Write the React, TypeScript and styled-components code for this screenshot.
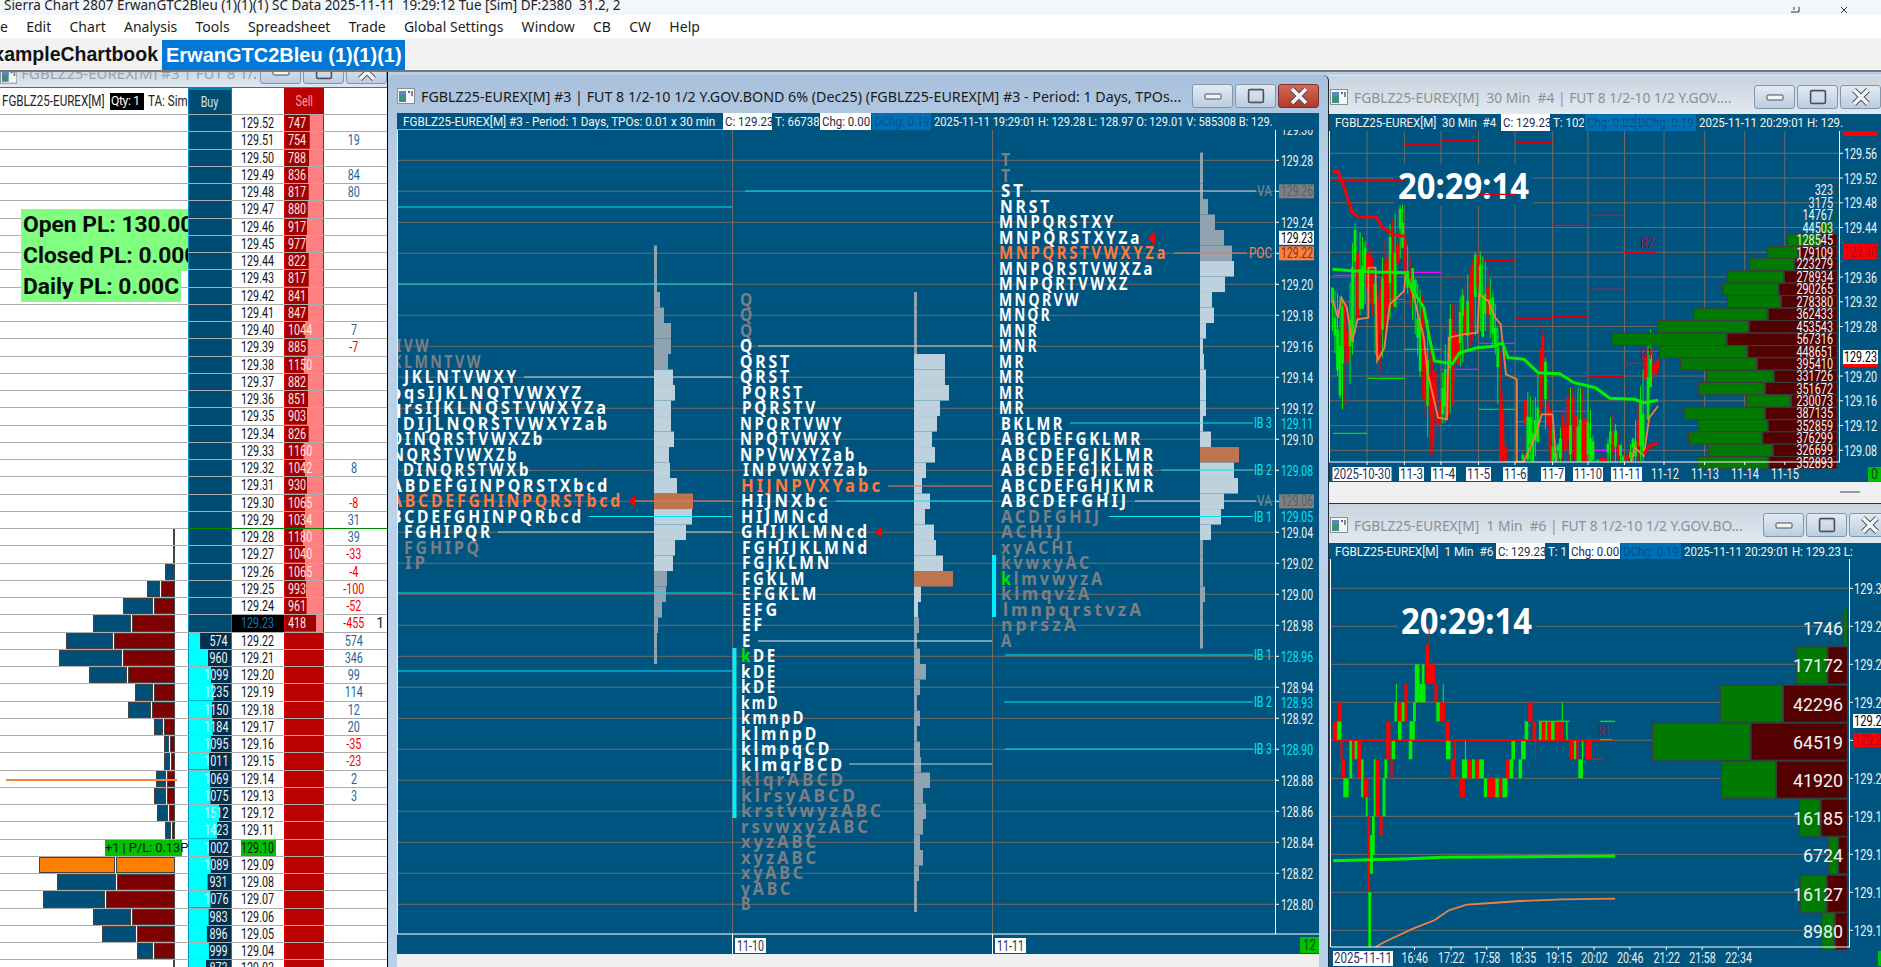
import React from 'react';
import styled, { createGlobalStyle } from 'styled-components';

const CHART = '#005580';
const GRID = '#72695f';
const CYAN = '#00e6f6';
const SOFT = '#c4d0d6';
const ORANGE = '#f2784a';

const GlobalStyle = createGlobalStyle`
	html, body { margin: 0; padding: 0; background: #fff; }
	* { box-sizing: border-box; }
`;

/* ---------- ladder data ---------- */
const sells = [747, 754, 788, 836, 817, 880, 917, 977, 822, 817, 841, 847, 1044, 885, 1150, 882, 851, 903, 826, 1160, 1042, 930, 1065, 1034, 1180, 1040, 1065, 993, 961, 418];
const buys = [574, 960, 1099, 1235, 1150, 1184, 1095, 1011, 1069, 1075, 1512, 1423, 1002, 1089, 931, 1076, 983, 896, 999, 873];
const deltas: Record<string, number> = {
	'129.51': 19, '129.49': 84, '129.48': 80, '129.40': 7, '129.39': -7, '129.32': 8, '129.30': -8, '129.29': 31,
	'129.28': 39, '129.27': -33, '129.26': -4, '129.25': -100, '129.24': -52, '129.23': -455, '129.22': 574,
	'129.21': 346, '129.20': 99, '129.19': 114, '129.18': 12, '129.17': 20, '129.16': -35, '129.15': -23, '129.14': 2, '129.13': 3,
};
// start x of blue part, end x of blue part, from left edge of the window; red runs to x=175
const hist: Record<string, [number, number]> = {
	'129.28': [172, 172], '129.27': [172, 172], '129.26': [164, 174], '129.25': [146, 159], '129.24': [122, 152], '129.23': [92, 130],
	'129.22': [65, 112], '129.21': [58, 121], '129.20': [88, 126], '129.19': [134, 152], '129.18': [127, 150], '129.17': [153, 162],
	'129.16': [163, 168], '129.15': [163, 169], '129.14': [155, 165], '129.13': [153, 165], '129.12': [156, 167], '129.11': [164, 170],
	'129.09': [38, 114], '129.08': [56, 115], '129.07': [42, 104], '129.06': [92, 130], '129.05': [101, 135], '129.04': [136, 152], '129.03': [171, 171],
};
const prices = Array.from({ length: 50 }, (_, i) => (129.52 - i * 0.01).toFixed(2));

/* ---------- TPO data: price, letters, x start, x end, tone ---------- */
type Tpo = [number, string, number, number, string?];
const tpoLeft: Tpo[] = [
	[129.16, 'IVW', 396, 428, 'd'], [129.15, 'KLMNTVW', 392, 480, 'd'], [129.14, 'JKLNTVWXY', 404, 516],
	[129.13, 'pqsIJKLNQTVWXYZ', 391, 581], [129.12, 'qrsIJKLNQSTVWXYZa', 391, 606], [129.11, 'DIJLNQRSTVWXYZab', 403, 607],
	[129.10, 'DINQRSTVWXZb', 391, 542], [129.09, 'NQRSTVWXZb', 392, 516], [129.08, 'DINQRSTWXb', 403, 528],
	[129.07, 'ABDEFGINPQRSTXbcd', 391, 607], [129.06, 'ABCDEFGHINPQRSTbcd', 391, 620, 'o'], [129.05, 'BCDEFGHINPQRbcd', 391, 581],
	[129.04, 'FGHIPQR', 404, 490], [129.03, 'FGHIPQ', 404, 479, 'd'], [129.02, 'IP', 405, 425, 'd'],
];
const tpoMid: Tpo[] = [
	[129.19, 'Q', 740, 752, 'd'], [129.18, 'Q', 740, 752, 'd'], [129.17, 'Q', 740, 752, 'd'], [129.16, 'Q', 740, 752],
	[129.15, 'QRST', 740, 789], [129.14, 'QRST', 740, 789], [129.13, 'PQRST', 742, 802], [129.12, 'PQRSTV', 742, 815],
	[129.11, 'NPQRTVWY', 740, 841], [129.10, 'NPQTVWXY', 740, 841], [129.09, 'NPVWXYZab', 740, 854], [129.08, 'INPVWXYZab', 743, 867],
	[129.07, 'HIJNPVXYabc', 741, 880, 'o'], [129.06, 'HIJNXbc', 741, 827], [129.05, 'HIJMNcd', 741, 828], [129.04, 'GHIJKLMNcd', 741, 867],
	[129.03, 'FGHIJKLMNd', 742, 867], [129.02, 'FGJKLMN', 742, 829], [129.01, 'FGKLM', 742, 804], [129.00, 'EFGKLM', 742, 816],
	[128.99, 'EFG', 742, 777], [128.98, 'EF', 742, 762], [128.97, 'E', 742, 750], [128.96, '!kDE', 741, 775], [128.95, 'kDE', 741, 775],
	[128.94, 'kDE', 741, 775], [128.93, 'kmD', 741, 777], [128.92, 'kmnpD', 741, 803], [128.91, 'klmnpD', 741, 816], [128.90, 'klmpqCD', 741, 829],
	[128.89, 'klmqrBCD', 741, 842], [128.88, 'klqrABCD', 741, 843, 'd'], [128.87, 'klrsyABCD', 741, 855, 'd'], [128.86, 'krstvwyzABC', 741, 881, 'd'],
	[128.85, 'rsvwxyzABC', 741, 868, 'd'], [128.84, 'xyzABC', 741, 816, 'd'], [128.83, 'xyzABC', 741, 816, 'd'], [128.82, 'xyABC', 741, 803, 'd'],
	[128.81, 'yABC', 741, 790, 'd'], [128.80, 'B', 741, 750, 'd'],
];
const tpoRight: Tpo[] = [
	[129.28, 'T', 1001, 1010, 'd'], [129.27, 'T', 1001, 1010, 'd'], [129.26, 'ST', 1001, 1023], [129.25, 'NRST', 1000, 1049],
	[129.24, 'MNPQRSTXY', 999, 1113], [129.23, 'MNPQRSTXYZa', 999, 1139], [129.22, 'MNPQRSTVWXYZa', 999, 1165, 'o'], [129.21, 'MNPQRSTVWXZa', 999, 1152],
	[129.20, 'MNPQRTVWXZ', 999, 1127], [129.19, 'MNQRVW', 999, 1078], [129.18, 'MNQR', 999, 1049], [129.17, 'MNR', 999, 1036], [129.16, 'MNR', 999, 1036],
	[129.15, 'MR', 999, 1023], [129.14, 'MR', 999, 1023], [129.13, 'MR', 999, 1023], [129.12, 'MR', 999, 1023], [129.11, 'BKLMR', 1001, 1062],
	[129.10, 'ABCDEFGKLMR', 1001, 1140], [129.09, 'ABCDEFGJKLMR', 1001, 1153], [129.08, 'ABCDEFGJKLMR', 1001, 1153], [129.07, 'ABCDEFGHJKMR', 1001, 1153],
	[129.06, 'ABCDEFGHIJ', 1001, 1126], [129.05, 'ACDFGHIJ', 1001, 1099, 'd'], [129.04, 'ACHIJ', 1001, 1061, 'd'], [129.03, 'xyACHI', 1001, 1072, 'd'],
	[129.02, 'kvwxyAC', 1001, 1089, 'd'], [129.01, '!klmvwyzA', 1001, 1102, 'd'], [129.00, 'klmqvzA', 1001, 1089, 'd'], [128.99, 'lmnpqrstvzA', 1003, 1141, 'd'],
	[128.98, 'nprszA', 1001, 1076, 'd'], [128.97, 'A', 1001, 1011, 'd'],
];

/* profile bars: top price, widths going down; p marks the POC row, l the light value-area rows */
type Profile = { base: number; top: number; widths: number[]; poc: number; from: number; to: number };
const profiles: Profile[] = [
	{
		base: 654, top: 129.22, poc: 129.06, from: 129.14, to: 129.02,
		widths: [3, 3, 3, 6, 10, 17, 17, 14, 19, 21, 17, 17, 20, 15, 16, 23, 39, 38, 32, 21, 19, 13, 12, 8, 4, 3, 3],
	},
	{
		base: 914, top: 129.19, poc: 129.01, from: 129.15, to: 128.99,
		widths: [3, 3, 3, 3, 31, 31, 35, 26, 23, 18, 21, 12, 8, 16, 11, 20, 22, 29, 39, 7, 4, 5, 3, 6, 12, 6, 3, 6, 3, 6, 7, 16, 9, 12, 9, 6, 9, 5, 3, 3],
	},
	{
		base: 1200, top: 129.28, poc: 129.09, from: 129.21, to: 129.04,
		widths: [3, 3, 3, 8, 15, 24, 32, 34, 25, 12, 14, 6, 3, 4, 6, 6, 6, 3, 11, 39, 34, 38, 24, 21, 11, 3, 3, 3, 5, 3, 3, 3],
	},
];

const yMain = (p: number) => 129.3 + (129.3 - p) * 1550;

type Seg = [number, number, number, string];
const mainLines: Seg[] = [
	[191, 745, 992, CYAN], [207, 398, 732, CYAN], [284, 398, 732, CYAN], [346, 758, 992, SOFT], [377, 524, 732, SOFT],
	[486, 888, 992, ORANGE], [501, 635, 732, ORANGE], [501, 836, 992, CYAN], [516.5, 589, 732, CYAN], [532, 498, 732, SOFT],
	[593, 398, 732, CYAN], [641, 758, 992, '#e8f0f4'], [671, 398, 732, CYAN], [764, 849, 992, SOFT],
	[191, 1031, 1256, SOFT], [253, 1174, 1247, ORANGE], [423, 1070, 1253, CYAN], [470, 1161, 1253, CYAN], [501, 1135, 1256, SOFT],
	[516.5, 1109, 1253, CYAN], [655, 1005, 1253, CYAN], [702, 1004, 1253, CYAN], [749, 1005, 1253, CYAN],
];
const lineTags: [number, string, string][] = [
	[191, 'VA', 'va'], [253, 'POC', 'poc'], [423, 'IB 3', 'ib'], [470, 'IB 2', 'ib'], [501, 'VA', 'va'],
	[516.5, 'IB 1', 'ib'], [655, 'IB 1', 'ib'], [702, 'IB 2', 'ib'], [749, 'IB 3', 'ib'],
];
const axisBoxes: Record<string, [string, string]> = {
	'129.26': ['#7f7f7f', '#54626a'], '129.23': ['#ffffff', '#000000'], '129.22': ['#ff7f3f', '#7a3412'], '129.06': ['#7f7f7f', '#54626a'],
};
const axisCyan = ['129.11', '129.08', '129.05', '128.96', '128.93', '128.90'];

/* ---------- 30 min chart (coords read off the reference, see X9/Y9) ---------- */
const X9 = (x: number) => 1320 + x / 2.795;
const Y9 = (y: number) => 70 + y / 3;
const Y10 = (y: number) => 500 + y / 3;
const poly = (pts: number[][], fy: (n: number) => number) => pts.map(([x, y]) => `${X9(x).toFixed(1)},${fy(y).toFixed(1)}`).join(' ');

const vols30: [string, number, number, number][] = [
	['323', 358, 1442, 1445], ['3175', 395, 0, 0], ['14767', 433, 1436, 1441], ['44503', 470, 1400, 1430], ['128545', 508, 1306, 1400],
	['179109', 545, 1250, 1335], ['223279', 580, 1200, 1325], ['278934', 618, 1138, 1295], ['290265', 655, 1125, 1280], ['278380', 692, 1138, 1287],
	['362433', 730, 1044, 1250], ['453543', 767, 944, 1197], ['567316', 805, 815, 1135], ['448651', 842, 949, 1193], ['395410', 879, 1008, 1220],
	['331726', 916, 1081, 1267], ['351672', 953, 1058, 1242], ['230073', 990, 1192, 1315], ['387135', 1027, 1018, 1242], ['352859', 1064, 1056, 1250],
	['376299', 1101, 1030, 1235], ['326699', 1138, 1086, 1264], ['352893', 1175, 1056, 1252],
];
const levels30: [number, number, number, string][] = [
	[236, 338, 220, '#e00010'], [338, 443, 208, '#e00010'], [546, 650, 214, '#e00010'], [36, 236, 328, '#e00010'], [443, 546, 370, '#e00010'],
	[650, 750, 463, '#ff0000'], [750, 850, 433, '#ff0000'], [850, 940, 544, '#e00010'], [338, 443, 620, '#ff0000'], [443, 546, 568, '#e00010'],
	[750, 850, 655, '#ff0000'], [546, 650, 742, '#e00010'], [650, 750, 736, '#e00010'], [750, 850, 916, '#e00010'], [850, 940, 877, '#ff0000'],
	[36, 132, 613, '#ff00ff'], [132, 236, 685, '#ff00ff'], [238, 338, 604, '#ff00ff'], [338, 443, 895, '#ff00ff'], [443, 546, 817, '#ff00ff'],
	[546, 650, 1052, '#ff00ff'], [650, 750, 1021, '#ff00ff'], [750, 850, 1138, '#ff00ff'],
	[36, 132, 1087, '#00e000'], [132, 236, 922, '#00e000'], [236, 338, 835, '#00e000'], [443, 546, 1015, '#00e000'],
];
const envelope30 = [
	[35, 650, 780], [60, 680, 1020], [80, 700, 990], [95, 450, 800], [120, 500, 700], [145, 540, 700], [160, 680, 950], [185, 480, 800], [205, 440, 700],
	[230, 390, 520], [240, 500, 640], [265, 620, 780], [290, 680, 1010], [310, 800, 1170], [335, 1000, 1060], [360, 700, 1050], [385, 700, 900], [410, 620, 850],
	[440, 525, 780], [470, 590, 780], [490, 700, 850], [505, 850, 1170], [522, 1170, 1172], [566, 1170, 1172], [575, 950, 1170], [600, 1000, 1170], [622, 765, 1000],
	[640, 980, 1170], [660, 1150, 1172], [690, 950, 1170], [750, 950, 1170], [770, 1170, 1172], [800, 1150, 1172], [815, 1010, 1170], [850, 1165, 1172], [875, 1100, 1170],
	[905, 880, 1170], [925, 770, 930], [935, 870, 930], [945, 860, 900],
];
const candles30 = (() => {
	let seed = 17;
	const rnd = () => {
		seed = (seed * 16807) % 2147483647;
		return seed / 2147483647;
	};
	const out: { x: number; a: number; b: number; ha: number; hb: number; up: boolean }[] = [];
	for (let x = 35; x <= 945; x += 7) {
		const i = envelope30.findIndex((e) => e[0] >= x);
		const hi = envelope30[Math.max(i, 1)];
		const lo = envelope30[Math.max(i, 1) - 1];
		const t = (x - lo[0]) / (hi[0] - lo[0]);
		const top = lo[1] + (hi[1] - lo[1]) * t;
		const bot = lo[2] + (hi[2] - lo[2]) * t;
		const a = top + rnd() * (bot - top) * 0.55;
		const b = Math.min(a + (0.25 + rnd() * 0.45) * (bot - top), 1172);
		out.push({ x, a, b, ha: top, hb: Math.min(bot, 1172), up: rnd() > 0.48 });
	}
	return out;
})();
const redLine30 = [[35, 300], [50, 302], [65, 340], [90, 425], [105, 437], [158, 438], [175, 470], [205, 490], [240, 497]];
const redLine30b = [[905, 1150], [920, 1125], [945, 1115]];
const greenLine30 = [[35, 595], [100, 600], [160, 603], [240, 605], [255, 650], [290, 710], [305, 795], [320, 870], [370, 878], [390, 845], [440, 830], [490, 825], [510, 815], [525, 860], [570, 865], [610, 905], [670, 908], [710, 935], [770, 950], [810, 982], [880, 985], [905, 995], [945, 988]];
const orangeLine30 = [[35, 685], [50, 740], [60, 680], [75, 710], [90, 810], [105, 745], [135, 740], [135, 590], [155, 590], [160, 870], [180, 830], [195, 700], [235, 660], [240, 600], [265, 690], [290, 800], [300, 900], [330, 1040], [355, 1045], [360, 800], [400, 790], [440, 785], [445, 670], [470, 690], [490, 740], [505, 760], [520, 910], [550, 925], [550, 1172], [570, 1172], [600, 1100], [620, 1030], [650, 1030], [660, 1172]];
const orangeLine30b = [[870, 1172], [880, 1130], [905, 1155], [920, 1040], [945, 1005]];
const axis30 = ['129.56', '129.52', '129.48', '129.44', '129.36', '129.32', '129.28', '129.20', '129.16', '129.12', '129.08'];
const grid30 = [1367, 1404.4, 1441, 1478.5, 1515, 1552.6, 1588, 1624.5, 1664, 1704.6, 1744.7, 1784.8];
const dates30: [string, number, number, boolean][] = [
	['2025-10-30', 1332.5, 1391.5, true], ['11-3', 1399, 1424, true], ['11-4', 1431, 1456, true], ['11-5', 1466, 1491, true], ['11-6', 1503, 1527.5, true],
	['11-7', 1541, 1565, true], ['11-10', 1573, 1603, true], ['11-11', 1611, 1642, true], ['11-12', 1650, 1680, false], ['11-13', 1690, 1720, false],
	['11-14', 1730, 1760, false], ['11-15', 1770, 1800, false],
];

/* ---------- 1 min chart ---------- */
const vols1: [string, number, number, number][] = [
	['1746', 378, 1463, 1473], ['17172', 490, 1331, 1417], ['42296', 605, 1119, 1293], ['64519', 719, 929, 1202], ['41920', 833, 1122, 1273],
	['16185', 947, 1340, 1398], ['6724', 1060, 1422, 1447], ['16127', 1175, 1342, 1415], ['8980', 1288, 1402, 1438],
];
type Bar = [number, number, number, number, 'r' | 'g'];
const bars1: Bar[] = [
	[36, 48, 658, 715, 'r'], [48, 60, 658, 715, 'g'], [50, 60, 601, 658, 'r'], [57, 63, 715, 772, 'r'], [60, 70, 772, 829, 'r'], [65, 80, 829, 886, 'g'],
	[82, 90, 715, 829, 'g'], [90, 97, 715, 772, 'r'], [97, 105, 715, 772, 'g'], [105, 115, 715, 829, 'r'], [115, 122, 772, 886, 'g'], [122, 135, 829, 886, 'r'],
	[128, 133, 886, 943, 'g'], [133, 140, 943, 1170, 'r'], [135, 143, 1170, 1335, 'g'], [140, 148, 1000, 1115, 'g'], [145, 153, 943, 1060, 'g'], [150, 158, 772, 943, 'g'],
	[155, 165, 772, 943, 'r'], [167, 175, 943, 1000, 'r'], [175, 183, 829, 943, 'g'], [180, 188, 772, 829, 'g'], [185, 197, 658, 772, 'r'], [197, 203, 772, 829, 'r'],
	[200, 210, 715, 772, 'g'], [208, 218, 601, 658, 'g'], [212, 215, 545, 601, 'g'], [218, 228, 658, 715, 'g'], [215, 228, 601, 658, 'r'], [228, 238, 601, 658, 'g'],
	[236, 244, 545, 658, 'r'], [248, 258, 715, 772, 'g'], [250, 265, 658, 715, 'g'], [260, 268, 601, 658, 'g'], [265, 278, 487, 601, 'g'], [278, 295, 545, 601, 'g'],
	[285, 292, 487, 545, 'g'], [295, 305, 430, 545, 'r'], [305, 322, 487, 545, 'r'], [320, 330, 545, 601, 'r'], [325, 335, 601, 658, 'g'], [335, 350, 601, 658, 'r'],
	[343, 346, 545, 601, 'g'], [350, 362, 658, 715, 'r'], [352, 365, 715, 772, 'g'], [365, 378, 772, 829, 'r'], [375, 380, 715, 772, 'r'], [390, 405, 829, 886, 'r'],
	[397, 412, 772, 829, 'g'], [405, 408, 715, 772, 'g'], [412, 425, 772, 829, 'r'], [425, 433, 772, 829, 'g'], [433, 445, 772, 829, 'r'], [445, 458, 772, 829, 'g'],
	[458, 468, 829, 886, 'g'], [468, 490, 829, 886, 'r'], [490, 500, 829, 886, 'g'], [500, 510, 829, 886, 'r'], [510, 524, 829, 886, 'g'], [520, 530, 772, 829, 'r'],
	[530, 540, 772, 829, 'g'], [535, 545, 715, 772, 'g'], [545, 555, 772, 772, 'r'], [555, 565, 772, 829, 'g'], [562, 575, 715, 772, 'g'], [572, 582, 658, 715, 'g'],
	[582, 594, 601, 658, 'r'], [594, 604, 658, 715, 'r'], [601, 604, 715, 772, 'r'], [612, 620, 658, 715, 'g'], [620, 630, 658, 715, 'r'], [630, 636, 658, 715, 'g'],
	[636, 646, 658, 715, 'r'], [646, 656, 658, 715, 'g'], [656, 670, 658, 715, 'r'], [676, 679, 601, 715, 'g'], [672, 680, 658, 715, 'r'], [688, 692, 658, 715, 'g'],
	[698, 710, 715, 772, 'r'], [710, 716, 715, 772, 'g'], [716, 722, 715, 772, 'r'], [722, 735, 772, 829, 'g'], [732, 736, 715, 772, 'g'], [742, 760, 715, 772, 'r'],
];
const ticks1: [number, number, number, string][] = [
	[36, 820, 715, '#ff0000'], [612, 698, 658, '#00e000'], [783, 825, 658, '#00e000'], [783, 817, 713, '#00e000'], [760, 790, 772, '#ff0000'],
];
const orangeLine1 = [[155, 1335], [180, 1320], [210, 1305], [260, 1280], [320, 1255], [360, 1225], [410, 1208], [480, 1203], [560, 1197], [680, 1192], [825, 1190]];
const greenLine1 = [[36, 1076], [140, 1073], [250, 1070], [345, 1066], [575, 1064], [825, 1062]];
const gridY1 = [586.3, 624.3, 662.3, 700.3, 738.3, 776.3, 814.3, 852.3, 890.3, 928.3];
const axis1 = ['129.30', '129.28', '129.26', '129.24', '', '129.20', '129.18', '129.16', '129.14', '129.12'];
const dates1: [string, number][] = [['16:46', 228], ['17:22', 330], ['17:58', 430], ['18:35', 530], ['19:15', 630], ['20:02', 730], ['20:46', 830], ['21:22', 932], ['21:58', 1032], ['22:34', 1133]];

/* ---------- parts ---------- */
function WinIcon() {
	return (
		<svg width="18" height="16" viewBox="0 0 18 16">
			<rect x="0.5" y="0.5" width="17" height="15" fill="#f4f6f8" stroke="#8a8f95" />
			<rect x="2" y="3" width="7" height="11" fill="#3f8f7c" />
			<rect x="2" y="3" width="7" height="4" fill="#5f86b8" />
			<rect x="11" y="3" width="2" height="2" fill="#666" />
			<rect x="14" y="3" width="2" height="5" fill="#888" />
		</svg>
	);
}

function Controls({ active, overhang }: { active?: boolean; overhang?: boolean }) {
	return (
		<WinButtons $overhang={overhang}>
			<WinButton>
				<svg width="18" height="10" viewBox="0 0 18 10"><rect x="1" y="3" width="16" height="5" rx="1" fill="#f4f4f4" stroke="#44505e" /></svg>
			</WinButton>
			<WinButton>
				<svg width="18" height="16" viewBox="0 0 18 16"><rect x="2" y="2" width="14" height="12" rx="1" fill="none" stroke="#44505e" strokeWidth="2.4" /><rect x="3" y="3" width="12" height="10" fill="none" stroke="#f4f4f4" /></svg>
			</WinButton>
			<WinButton $close={active}>
				<svg width="22" height="18" viewBox="0 0 22 18">
					<path d="M4 2 L18 16 M18 2 L4 16" stroke="#44505e" strokeWidth="5.4" />
					<path d="M4 2 L18 16 M18 2 L4 16" stroke="#f6f6f6" strokeWidth="3.6" />
				</svg>
			</WinButton>
		</WinButtons>
	);
}

function TpoRow({ row, cy }: { row: Tpo; cy: number }) {
	const [, raw, x0, x1, tone] = row;
	const green = raw.startsWith('!');
	const letters = green ? raw.slice(1) : raw;
	return (
		<TpoText x={x0} y={cy + 5.8} $tone={tone || 'w'} textLength={x1 - x0 + 3} lengthAdjust="spacingAndGlyphs">
			{green ? <tspan fill="#00e000">{letters[0]}</tspan> : null}
			{green ? letters.slice(1) : letters}
		</TpoText>
	);
}

function LadderRows() {
	return (
		<>
			{prices.map((p, i) => {
				const sell = sells[i];
				const buy = i >= 30 ? buys[i - 30] : undefined;
				const d = deltas[p];
				const h = hist[p];
				return (
					<LadderRow key={p}>
						<HistCell>
							{h ? (
								<>
									{h[1] > h[0] ? <HistBar $kind={p === '129.09' ? 'orange' : 'blue'} style={{ width: h[1] - h[0] }} /> : null}
									{p !== '129.26' ? <HistBar $kind={p === '129.09' ? 'orange' : 'red'} style={{ width: 174 - h[1] - 1 }} /> : null}
								</>
							) : null}
							{p === '129.10' ? <PnlTag>+1 | P/L: 0.13P</PnlTag> : null}
							{p === '129.14' ? <EntryLine /> : null}
						</HistCell>
						<BuyCell $filled={buy !== undefined} style={buy !== undefined ? ({ '--fill': `${buy / 50}px` } as React.CSSProperties) : undefined}>
							{buy !== undefined ? <Num $origin="right">{buy}</Num> : null}
						</BuyCell>
						<PriceCell $last={p === '129.23'}>
							{p === '129.10' ? <FillTag><Num>{p}</Num></FillTag> : <Num>{p}</Num>}
						</PriceCell>
						<SellCell $filled={sell !== undefined} style={sell !== undefined ? ({ '--fill': `${sell === 418 ? 31 : 36 - sell * 0.015}px` } as React.CSSProperties) : undefined}>
							{sell !== undefined ? <Num $origin="left">{sell}</Num> : null}
						</SellCell>
						<DeltaCell $neg={d < 0}>
							{d !== undefined ? <Num>{d}</Num> : null}
							{p === '129.23' ? <PosMark>1</PosMark> : null}
						</DeltaCell>
						{p === '129.29' ? <HighLine /> : null}
					</LadderRow>
				);
			})}
		</>
	);
}

function MainChart() {
	const gridPrices = Array.from({ length: 26 }, (_, i) => 129.3 - i * 0.02);
	return (
		<ChartSvg width="922" height="824" viewBox="397 130 922 824">
			<rect x="397" y="130" width="922" height="824" fill={CHART} />
			{gridPrices.slice(1).map((p) => (
				<line key={p} x1="398" x2="1275" y1={yMain(p)} y2={yMain(p)} stroke={GRID} />
			))}
			<line x1="732.5" x2="732.5" y1="130" y2="934" stroke={GRID} />
			<line x1="992.5" x2="992.5" y1="130" y2="934" stroke={GRID} />
			{profiles.map((pf) =>
				pf.widths.map((w, i) => {
					const p = +(pf.top - i * 0.01).toFixed(2);
					const fill = p === pf.poc ? '#bd7550' : p <= pf.from && p >= pf.to ? '#bdd2dd' : '#8fa3b0';
					return <rect key={`${pf.base}-${i}`} x={pf.base} y={yMain(p) - 7.75} width={w} height={15.5} fill={fill} />;
				}),
			)}
			{mainLines.map(([y, a, b, c], i) => (
				<line key={i} x1={a} x2={b} y1={y} y2={y} stroke={c} strokeWidth="1.2" />
			))}
			<rect x="732.5" y="648" width="4" height="170" fill="#00f0ff" />
			<rect x="992" y="555" width="4" height="62" fill="#00f0ff" />
			<polygon points="629,501 635,495 635,507" fill="#ff0000" />
			<polygon points="875,532 882,526 882,538" fill="#ff0000" />
			<polygon points="1148,238 1155,232 1155,245" fill="#ff0000" />
			{[tpoLeft, tpoMid, tpoRight].map((set) => set.map((r) => <TpoRow key={`${r[2]}-${r[0]}`} row={r} cy={yMain(r[0])} />))}
			{lineTags.map(([y, t, k], i) => (
				<TagText key={i} x={k === 'poc' ? 1249 : k === 'va' ? 1257 : 1254} y={y + 5} $kind={k} textLength={k === 'poc' ? 23 : k === 'va' ? 15 : 18} lengthAdjust="spacingAndGlyphs">{t}</TagText>
			))}
			<line x1="1275.5" x2="1275.5" y1="130" y2="934" stroke="#fff" />
			<line x1="397" x2="1319" y1="934" y2="934" stroke="#fff" />
			<line x1="397.5" x2="397.5" y1="130" y2="934" stroke="#e8f0f4" />
			{gridPrices.map((p) => {
				const s = p.toFixed(2);
				return <line key={s} x1="1276" x2="1279" y1={yMain(p)} y2={yMain(p)} stroke="#fff" />;
			})}
			{gridPrices.filter((p) => !axisBoxes[p.toFixed(2)]).map((p) => {
				const s = p.toFixed(2);
				return (
					<AxisText key={s} x="1281" y={yMain(p) + 5.5} $tone={axisCyan.includes(s) ? 'cyan' : 'white'} textLength="32" lengthAdjust="spacingAndGlyphs">{s}</AxisText>
				);
			})}
			{['129.11', '129.05', '128.93'].map((s) => (
				<AxisText key={s} x="1281" y={yMain(+s) + 5.5} $tone="cyan" textLength="32" lengthAdjust="spacingAndGlyphs">{s}</AxisText>
			))}
			{Object.entries(axisBoxes).map(([s, [bg, fg]]) => (
				<g key={s}>
					<rect x="1279" y={yMain(+s) - 7} width="35" height="14" fill={bg} />
					<AxisText x="1281" y={yMain(+s) + 5} fill={fg} textLength="32" lengthAdjust="spacingAndGlyphs">{s}</AxisText>
				</g>
			))}
			<line x1="732.5" x2="732.5" y1="934" y2="954" stroke="#fff" />
			<line x1="992.5" x2="992.5" y1="934" y2="954" stroke="#fff" />
			<rect x="735" y="938" width="31" height="15" fill="#fff" />
			<DateText x="737" y="950.5" $tone="dark" textLength="27" lengthAdjust="spacingAndGlyphs">11-10</DateText>
			<rect x="995" y="938" width="31" height="15" fill="#fff" />
			<DateText x="997" y="950.5" $tone="dark" textLength="27" lengthAdjust="spacingAndGlyphs">11-11</DateText>
			<rect x="1300" y="937" width="19" height="16" fill="#00c000" />
			<DateText x="1303" y="950" $tone="green" textLength="13" lengthAdjust="spacingAndGlyphs">12</DateText>
		</ChartSvg>
	);
}

function Chart30() {
	const y30 = (p: number) => 152.3 + (129.56 - p) * 618.75;
	return (
		<ChartSvg width="552" height="351" viewBox="1329 130 552 351">
			<rect x="1329" y="130" width="552" height="351" fill={CHART} />
			{Array.from({ length: 14 }, (_, i) => 129.6 - i * 0.04).map((p) => (
				<line key={p} x1="1330" x2="1839" y1={y30(p)} y2={y30(p)} stroke={GRID} />
			))}
			{grid30.map((x) => (
				<line key={x} x1={x} x2={x} y1="130" y2="461" stroke={GRID} />
			))}
			<rect x="1394" y="163" width="139" height="42" fill={CHART} />
			<ClockText x="1398" y="198" textLength="131" lengthAdjust="spacingAndGlyphs">20:29:14</ClockText>
			{levels30.map(([a, b, y, c], i) => (
				<line key={i} x1={X9(a)} x2={X9(b)} y1={Y9(y)} y2={Y9(y)} stroke={c} strokeWidth="1.2" />
			))}
			{candles30.map((c, i) => {
				const col = c.up ? '#00ee00' : '#ff0000';
				return (
					<g key={i}>
						<line x1={X9(c.x)} x2={X9(c.x)} y1={Y9(c.ha)} y2={Y9(c.hb)} stroke={col} />
						<rect x={X9(c.x) - 1.4} y={Y9(c.a)} width="2.8" height={Y9(c.b) - Y9(c.a)} fill={col} />
					</g>
				);
			})}
			<polyline points={poly(orangeLine30, Y9)} fill="none" stroke="#f08040" strokeWidth="1.8" />
			<polyline points={poly(orangeLine30b, Y9)} fill="none" stroke="#f08040" strokeWidth="1.8" />
			<polyline points={poly(redLine30, Y9)} fill="none" stroke="#ff0000" strokeWidth="3" />
			<polyline points={poly(redLine30b, Y9)} fill="none" stroke="#ff0000" strokeWidth="3" />
			<polyline points={poly(greenLine30, Y9)} fill="none" stroke="#00f000" strokeWidth="3" />
			<RLevelText x={X9(895)} y={Y9(530)} textLength="14" lengthAdjust="spacingAndGlyphs">R2</RLevelText>
			<RLevelText x={X9(895)} y={Y9(863)} textLength="13" lengthAdjust="spacingAndGlyphs">R1</RLevelText>
			{vols30.map(([t, cy, g0, g1]) => {
				const top = Y9(cy) - 6.1;
				const right = X9(1445);
				return (
					<g key={t}>
						{g1 > g0 ? <rect x={X9(g0)} y={top} width={X9(g1) - X9(g0)} height="12.2" fill="#007a00" stroke="#3c3c3c" /> : null}
						{g1 > g0 && g1 < 1430 ? <rect x={X9(g1) + 1} y={top} width={right - X9(g1) - 1} height="12.2" fill="#520000" stroke="#3c3c3c" /> : null}
						<VolText x={1833 - t.length * 6.1} y={Y9(cy) + 5} textLength={t.length * 6.1} lengthAdjust="spacingAndGlyphs">{t}</VolText>
					</g>
				);
			})}
			<line x1="1839.5" x2="1839.5" y1="130" y2="461" stroke="#fff" />
			<line x1="1329" x2="1840" y1="461" y2="461" stroke="#fff" />
			<line x1="1329.5" x2="1329.5" y1="130" y2="461" stroke="#fff" />
			<rect x="1843" y="130" width="35" height="5" fill="#ff0000" />
			{axis30.map((s) => (
				<g key={s}>
					<line x1="1840" x2="1843" y1={y30(+s)} y2={y30(+s)} stroke="#fff" />
					<AxisText x="1844" y={y30(+s) + 5.5} $tone="white" textLength="33" lengthAdjust="spacingAndGlyphs">{s}</AxisText>
				</g>
			))}
			<rect x="1843" y="243" width="35" height="15" fill="#ff0000" />
			<AxisText x="1844" y="256" fill="#a01020" textLength="33" lengthAdjust="spacingAndGlyphs">129.40</AxisText>
			<rect x="1843" y="362" width="35" height="4" fill="#ff0000" />
			<rect x="1843" y="349" width="35" height="14" fill="#fff" />
			<AxisText x="1844" y="361" fill="#000" textLength="33" lengthAdjust="spacingAndGlyphs">129.23</AxisText>
			{grid30.map((x) => (
				<line key={x} x1={x} x2={x} y1="461" y2="464" stroke="#fff" />
			))}
			{dates30.map(([t, a, b, box]) => (
				<g key={t}>
					{box ? <rect x={a} y="466" width={b - a} height="14" fill="#fff" /> : null}
					<DateText x={a + 1} y="478" $tone={box ? 'dark' : 'light'} textLength={b - a - 2} lengthAdjust="spacingAndGlyphs">{t}</DateText>
				</g>
			))}
			<rect x="1868" y="466" width="13" height="15" fill="#00c000" />
			<DateText x="1871" y="478" $tone="green" textLength="7" lengthAdjust="spacingAndGlyphs">0</DateText>
		</ChartSvg>
	);
}

function Chart1() {
	return (
		<ChartSvg width="552" height="410" viewBox="1329 557 552 410">
			<rect x="1329" y="557" width="552" height="410" fill={CHART} />
			{gridY1.map((y) => (
				<line key={y} x1="1331" x2="1849" y1={y} y2={y} stroke={GRID} />
			))}
			<rect x="1398" y="606" width="138" height="32" fill={CHART} />
			<ClockText x="1401" y="632" textLength="131" lengthAdjust="spacingAndGlyphs">20:29:14</ClockText>
			<line x1={X9(305)} x2={X9(305)} y1={Y10(370)} y2={Y10(430)} stroke="#ff0000" />
			{bars1.map(([a, b, t, bt, c], i) => (
				<rect key={i} x={X9(a)} y={Y10(t)} width={X9(b) - X9(a)} height={Y10(bt) - Y10(t)} fill={c === 'r' ? '#ff0000' : '#00ee00'} />
			))}
			{ticks1.map(([a, b, y, c], i) => (
				<line key={i} x1={X9(a)} x2={X9(b)} y1={Y10(y)} y2={Y10(y)} stroke={c} strokeWidth="1.4" />
			))}
			<polyline points={poly(orangeLine1, Y10)} fill="none" stroke="#f08040" strokeWidth="1.8" />
			<polyline points={poly(greenLine1, Y10)} fill="none" stroke="#00f000" strokeWidth="3" />
			<RLevelText x={X9(777)} y={Y10(702)} textLength="12" lengthAdjust="spacingAndGlyphs">R1</RLevelText>
			{vols1.map(([t, cy, g0, g1]) => {
				const top = Y10(cy) - 18.5;
				const right = X9(1474);
				return (
					<g key={t}>
						<rect x={X9(g0)} y={top} width={X9(g1) - X9(g0)} height="37" fill="#007a00" stroke="#3c3c3c" />
						<rect x={X9(g1) + 1} y={top} width={right - X9(g1) - 1} height="37" fill="#520000" stroke="#3c3c3c" />
						<VolText x={1843 - t.length * 10} y={Y10(cy) + 7} $big textLength={t.length * 10} lengthAdjust="spacingAndGlyphs">{t}</VolText>
					</g>
				);
			})}
			<line x1="1849.5" x2="1849.5" y1="557" y2="945" stroke="#fff" />
			<line x1="1331" x2="1850" y1="945" y2="945" stroke="#fff" />
			<line x1="1330.5" x2="1330.5" y1="557" y2="945" stroke="#fff" />
			{gridY1.map((y, i) => (
				<g key={y}>
					<line x1="1850" x2="1853" y1={y} y2={y} stroke="#fff" />
					{axis1[i] ? <AxisText x="1854" y={y + 5.5} $tone="white" textLength="34" lengthAdjust="spacingAndGlyphs">{axis1[i]}</AxisText> : null}
				</g>
			))}
			<rect x="1853" y="712" width="28" height="14" fill="#fff" />
			<AxisText x="1854" y="724" fill="#000" textLength="34" lengthAdjust="spacingAndGlyphs">129.23</AxisText>
			<rect x="1853" y="731" width="28" height="14" fill="#ff0000" />
			<AxisText x="1854" y="743" fill="#a01020" textLength="34" lengthAdjust="spacingAndGlyphs">129.22</AxisText>
			<rect x="1333" y="949" width="60" height="15" fill="#fff" />
			<DateText x="1334" y="961" $tone="dark" textLength="58" lengthAdjust="spacingAndGlyphs">2025-11-11</DateText>
			{dates1.map(([t, x]) => (
				<g key={t}>
					<line x1={X9(x + 36)} x2={X9(x + 36)} y1="945" y2="948" stroke="#fff" />
					<DateText x={X9(x)} y="961" $tone="light" textLength="26.5" lengthAdjust="spacingAndGlyphs">{t}</DateText>
				</g>
			))}
			<rect x="1878" y="949" width="3" height="15" fill="#00c000" />
		</ChartSvg>
	);
}

export default function App() {
	return (
		<Page>
			<GlobalStyle />
			<TitleBar>
				<TitleLine>Sierra Chart 2807 ErwanGTC2Bleu (1)(1)(1) SC Data 2025-11-11&nbsp; 19:29:12 Tue [Sim] DF:2380&nbsp; 31.2, 2</TitleLine>
				<AppControls>
					<svg width="70" height="10" viewBox="0 0 70 10">
						<path d="M0 5 H8 V0 M3 0 V3" fill="none" stroke="#333" />
						<path d="M50 0 L56 6 M56 0 L50 6" fill="none" stroke="#333" />
					</svg>
				</AppControls>
			</TitleBar>
			<MenuBar>
				<MenuRow>
					{['e', 'Edit', 'Chart', 'Analysis', 'Tools', 'Spreadsheet', 'Trade', 'Global Settings', 'Window', 'CB', 'CW', 'Help'].map((m) => (
						<MenuItem key={m}>{m}</MenuItem>
					))}
				</MenuRow>
			</MenuBar>
			<TabBar>
				<BookName>ExampleChartbook</BookName>
				<ActiveBook>ErwanGTC2Bleu (1)(1)(1)</ActiveBook>
			</TabBar>
			<Desktop>
				<LadderWindow>
					<LadderTitle>
						<WinIcon />
						<LadderTitleText>FGBLZ25-EUREX[M] #3 | FUT 8 1/2-...</LadderTitleText>
						<Controls />
					</LadderTitle>
					<LadderHead>
						<HeadInfo>
							<HeadLabel $width={108}>FGBLZ25-EUREX[M]</HeadLabel>
							<QtyTag>Qty: 1</QtyTag>
							<HeadLabel $width={40}>TA: Sim</HeadLabel>
						</HeadInfo>
						<BuyHead><Num>Buy</Num></BuyHead>
						<div />
						<SellHead><Num>Sell</Num></SellHead>
						<div />
					</LadderHead>
					<LadderBody>
						<LadderRows />
						<PlBox>
							<PlLine $wide>Open PL: 130.00</PlLine>
							<PlLine $wide>Closed PL: 0.000</PlLine>
							<PlLine>Daily PL: 0.00C</PlLine>
						</PlBox>
					</LadderBody>
				</LadderWindow>
				<MainWindow>
					<WindowTitle $active>
						<WinIcon />
						<WindowName $active $scale={0.95}>FGBLZ25-EUREX[M] #3 | FUT 8 1/2-10 1/2 Y.GOV.BOND 6% (Dec25) (FGBLZ25-EUREX[M] #3 - Period: 1 Days, TPOs...</WindowName>
						<Controls active />
					</WindowTitle>
					<ChartHeader>
						<HeaderName $width={326} $rule><HeadText $scale={0.866}>FGBLZ25-EUREX[M] #3 - Period: 1 Days, TPOs: 0.01 x 30 min</HeadText></HeaderName>
						<HeaderCell $width={49} $tone="light"><HeadText>C: 129.23</HeadText></HeaderCell>
						<HeaderCell $width={46}><HeadText>T: 66738</HeadText></HeaderCell>
						<HeaderCell $width={51} $tone="light"><HeadText>Chg: 0.00</HeadText></HeaderCell>
						<HeaderCell $width={59} $tone="muted"><HeadText>DChg: 0.19</HeadText></HeaderCell>
						<HeaderCell $width={345}><HeadText $scale={0.82}>2025-11-11 19:29:01 H: 129.28 L: 128.97 O: 129.01 V: 585308 B: 129.</HeadText></HeaderCell>
					</ChartHeader>
					<MainChart />
					<BottomStrip $height={13} />
				</MainWindow>
				<SideColumn>
					<SideWindow>
						<WindowTitle>
							<WinIcon />
							<WindowName $scale={0.92}>FGBLZ25-EUREX[M]&nbsp; 30 Min&nbsp; #4 | FUT 8 1/2-10 1/2 Y.GOV....</WindowName>
							<Controls />
						</WindowTitle>
						<ChartHeader>
							<HeaderName $width={172}><HeadText>FGBLZ25-EUREX[M]&nbsp; 30 Min&nbsp; #4</HeadText></HeaderName>
							<HeaderCell $width={49} $tone="light"><HeadText>C: 129.23</HeadText></HeaderCell>
							<HeaderCell $width={33}><HeadText>T: 102</HeadText></HeaderCell>
							<HeaderCell $width={50} $tone="muted"><HeadText>Chg: 0.02</HeadText></HeaderCell>
							<HeaderCell $width={60} $tone="muted"><HeadText>DChg: 0.19</HeadText></HeaderCell>
							<HeaderCell $width={180}><HeadText>2025-11-11 20:29:01 H: 129.</HeadText></HeaderCell>
						</ChartHeader>
						<Chart30 />
						<BottomStrip $height={21}><ScrollDash /></BottomStrip>
					</SideWindow>
					<SideWindow $second>
						<WindowTitle $second>
							<WinIcon />
							<WindowName $scale={0.92}>FGBLZ25-EUREX[M]&nbsp; 1 Min&nbsp; #6 | FUT 8 1/2-10 1/2 Y.GOV.BO...</WindowName>
							<Controls overhang />
						</WindowTitle>
						<ChartHeader $short>
							<HeaderName $width={167}><HeadText $scale={0.87}>FGBLZ25-EUREX[M]&nbsp; 1 Min&nbsp; #6</HeadText></HeaderName>
							<HeaderCell $width={49} $tone="light"><HeadText>C: 129.23</HeadText></HeaderCell>
							<HeaderCell $width={22}><HeadText>T: 1</HeadText></HeaderCell>
							<HeaderCell $width={51} $tone="light"><HeadText>Chg: 0.00</HeadText></HeaderCell>
							<HeaderCell $width={60} $tone="muted"><HeadText>DChg: 0.19</HeadText></HeaderCell>
							<HeaderCell $width={200}><HeadText>2025-11-11 20:29:01 H: 129.23 L:</HeadText></HeaderCell>
						</ChartHeader>
						<Chart1 />
					</SideWindow>
				</SideColumn>
			</Desktop>
		</Page>
	);
}

/* ---------- styles ---------- */
const Page = styled.div`
	display: flex;
	flex-direction: column;
	width: 1881px;
	height: 967px;
	overflow: hidden;
	font-family: 'Noto Sans', sans-serif;
	background: #f0f0f0;
`;
const TitleBar = styled.div`
	display: flex;
	justify-content: space-between;
	flex: none;
	height: 15px;
	padding-left: 4px;
	overflow: hidden;
	background: #f3f6fa;
`;
const TitleLine = styled.div`
	margin-top: -6px;
	font-size: 15px;
	line-height: 20px;
	color: #222;
	white-space: nowrap;
	transform: scaleX(0.897);
	transform-origin: left;
`;
const AppControls = styled.div`
	flex: none;
	padding-right: 20px;
`;
const MenuBar = styled.div`
	flex: none;
	height: 23px;
	overflow: hidden;
	background: #ffffff;
`;
const MenuRow = styled.div`
	display: flex;
	gap: 19.5px;
	width: 800px;
	transform: scaleX(0.935);
	transform-origin: left;
`;
const MenuItem = styled.span`
	font-size: 15px;
	line-height: 23px;
	color: #1c1c1c;
	white-space: nowrap;
`;
const TabBar = styled.div`
	display: flex;
	flex: none;
	align-items: flex-end;
	height: 34px;
	border-bottom: 2px solid #777;
	background: #f2f2f2;
`;
const BookName = styled.div`
	display: flex;
	justify-content: flex-end;
	width: 162px;
	padding: 0 4px 4px 0;
	overflow: hidden;
	font-family: 'Liberation Sans', sans-serif;
	font-size: 19.5px;
	font-weight: 700;
	line-height: 24px;
	color: #111;
	white-space: nowrap;
`;
const ActiveBook = styled.div`
	width: 243px;
	height: 30px;
	padding-left: 4px;
	overflow: hidden;
	font-family: 'Liberation Sans', sans-serif;
	font-size: 20px;
	font-weight: 700;
	line-height: 30px;
	color: #fff;
	white-space: nowrap;
	background: #0078d7;
`;
const Desktop = styled.div`
	display: flex;
	flex: 1;
	min-height: 0;
	background: #b8cfe8;
`;
const LadderWindow = styled.div`
	display: flex;
	flex-direction: column;
	flex: none;
	width: 388px;
	border-right: 1px solid #000;
	background: #fff;
`;
const LadderTitle = styled.div`
	display: flex;
	flex: none;
	align-items: flex-end;
	gap: 4px;
	height: 16px;
	padding-bottom: 3px;
	overflow: hidden;
	border-bottom: 1px solid #666;
	background: linear-gradient(#cdd9e6, #dfe7ef);
`;
const LadderTitleText = styled.div`
	width: 244px;
	margin-bottom: 4px;
	font-size: 15px;
	line-height: 14px;
	color: #9aa2aa;
	white-space: nowrap;
	overflow: hidden;
`;
const LadderHead = styled.div`
	display: grid;
	flex: none;
	grid-template-columns: 188px 44px 52px 40px 62px;
	height: 27px;
	border-bottom: 1px solid #adadad;
	font-family: Roboto, sans-serif;
	font-size: 14px;
`;
const HeadInfo = styled.div`
	display: flex;
	align-items: center;
	padding-left: 2px;
	overflow: hidden;
	white-space: nowrap;
	color: #222;
`;
const HeadLabel = styled.span<{ $width: number }>`
	display: inline-block;
	flex: none;
	width: ${(p) => p.$width}px;
	transform: scaleX(0.83);
	transform-origin: left;
`;
const QtyTag = styled.span`
	flex: none;
	width: 34px;
	height: 17px;
	margin-right: 4px;
	padding-left: 1px;
	overflow: hidden;
	font-size: 12px;
	line-height: 17px;
	letter-spacing: -0.3px;
	background: #000;
	color: #fff;
`;
const BuyHead = styled.div`
	display: flex;
	align-items: center;
	justify-content: center;
	background: #004b71;
	color: #cfe0ea;
	border: solid #0080c0;
	border-width: 2px 1px 0;
`;
const SellHead = styled.div`
	display: flex;
	align-items: center;
	justify-content: center;
	background: #bb0000;
	color: #ff9a9a;
`;
const LadderBody = styled.div`
	position: relative;
	flex: 1;
	min-height: 0;
	overflow: hidden;
	font-family: Roboto, sans-serif;
	font-size: 14px;
`;
const LadderRow = styled.div`
	position: relative;
	display: grid;
	grid-template-columns: 188px 44px 52px 40px 62px;
	height: 17.25px;
	border-bottom: 1px solid #adadad;
`;
const Num = styled.span<{ $origin?: string }>`
	display: inline-block;
	line-height: 16px;
	white-space: nowrap;
	transform: scaleX(0.77);
	transform-origin: ${(p) => p.$origin || 'center'};
`;
const HistCell = styled.div`
	position: relative;
	display: flex;
	justify-content: flex-end;
	gap: 1px;
	padding-right: 13px;
`;
const HistBar = styled.div<{ $kind: string }>`
	height: 100%;
	border: 1px solid #444;
	background: ${(p) => (p.$kind === 'orange' ? '#ff7f00' : p.$kind === 'red' ? '#7f0000' : '#004f78')};
`;
const PnlTag = styled.div`
	position: absolute;
	left: 105px;
	top: 0;
	width: 77px;
	height: 16px;
	font-size: 13px;
	line-height: 16px;
	text-align: center;
	white-space: nowrap;
	letter-spacing: -0.1px;
	background: #00c000;
	color: #0a1a0a;
`;
const EntryLine = styled.div`
	position: absolute;
	left: 6px;
	top: 8px;
	width: 171px;
	height: 2px;
	background: #ff7f3f;
`;
const BuyCell = styled.div<{ $filled: boolean }>`
	display: flex;
	align-items: center;
	justify-content: flex-end;
	padding-right: 3px;
	color: #f0f4f8;
	border-left: 1px solid #0090c8;
	border-right: 1px solid #0080c0;
	background: ${(p) => (p.$filled ? 'linear-gradient(#00ffff, #00ffff) no-repeat left / var(--fill) 100%, #00304e' : '#004b71')};
`;
const PriceCell = styled.div<{ $last: boolean }>`
	display: flex;
	align-items: center;
	justify-content: center;
	color: ${(p) => (p.$last ? '#0078c8' : '#141414')};
	background: ${(p) => (p.$last ? '#000' : 'transparent')};
`;
const FillTag = styled.span`
	display: flex;
	justify-content: center;
	width: 35px;
	height: 16px;
	background: #00c000;
`;
const SellCell = styled.div<{ $filled: boolean }>`
	display: flex;
	align-items: center;
	padding-left: 3px;
	color: #ffe6e6;
	border-left: 1px solid #e00000;
	border-right: 1px solid #e00000;
	background: ${(p) => (p.$filled ? 'linear-gradient(#a00000, #a00000) no-repeat left / var(--fill) 100%, #ff8080' : '#bb0000')};
`;
const DeltaCell = styled.div<{ $neg: boolean }>`
	position: relative;
	display: flex;
	align-items: center;
	justify-content: center;
	padding-right: 3px;
	color: ${(p) => (p.$neg ? '#f00000' : '#1a659e')};
`;
const PosMark = styled.span`
	position: absolute;
	right: 2px;
	color: #222;
`;
const HighLine = styled.div`
	position: absolute;
	left: 188px;
	right: 0;
	bottom: -1px;
	height: 1px;
	background: #008a00;
`;
const PlBox = styled.div`
	position: absolute;
	left: 21px;
	top: 94px;
	width: 167px;
	overflow: hidden;
`;
const PlLine = styled.div<{ $wide?: boolean }>`
	width: ${(p) => (p.$wide ? '167px' : '160px')};
	height: 31px;
	padding-left: 2px;
	overflow: hidden;
	font-size: 22.8px;
	font-weight: 700;
	line-height: 31px;
	color: #0a0a0a;
	white-space: nowrap;
	background: #80ff80;
`;
const MainWindow = styled.div`
	display: flex;
	flex-direction: column;
	flex: none;
	width: 941px;
	margin-top: 3px;
	padding: 0 9px;
	border-right: 1px solid #1c2a38;
	border-radius: 6px 6px 0 0;
	background: linear-gradient(#a9c1dc, #bcd2e9 120px, #b9d0ea);
`;
const WindowTitle = styled.div<{ $active?: boolean; $second?: boolean }>`
	display: flex;
	flex: none;
	align-items: center;
	justify-content: space-between;
	gap: 6px;
	height: ${(p) => (p.$second ? '39px' : '38px')};
	padding-top: 3px;
	${(p) => (p.$active ? '' : 'background: linear-gradient(#c8d4e0, #e2e9f0); padding-left: 1px;')}
`;
const WindowName = styled.div<{ $active?: boolean; $scale: number }>`
	flex: 1;
	min-width: 0;
	font-size: 15px;
	line-height: 20px;
	white-space: nowrap;
	color: ${(p) => (p.$active ? '#1a1a1a' : '#8c9094')};
	transform: scaleX(${(p) => p.$scale});
	transform-origin: left;
`;
const WinButtons = styled.div<{ $overhang?: boolean }>`
	display: flex;
	flex: none;
	gap: 2px;
	margin-right: ${(p) => (p.$overhang ? '-9px' : '0')};
`;
const WinButton = styled.div<{ $close?: boolean }>`
	display: flex;
	align-items: center;
	justify-content: center;
	width: 41px;
	height: 24px;
	border: 1px solid ${(p) => (p.$close ? '#7a3030' : '#8296aa')};
	border-radius: 3px;
	background: ${(p) => (p.$close ? 'linear-gradient(#d66a55, #b03a28)' : 'linear-gradient(#e2ebf4, #bccde0)')};
`;
const ChartHeader = styled.div<{ $short?: boolean }>`
	display: flex;
	flex: none;
	align-items: center;
	height: ${(p) => (p.$short ? '16px' : '17px')};
	overflow: hidden;
	font-family: Roboto, sans-serif;
	font-size: 13.5px;
	color: #f2f6f8;
	background: ${CHART};
`;
const HeadText = styled.span<{ $scale?: number }>`
	display: inline-block;
	transform: scaleX(${(p) => p.$scale || 0.85});
	transform-origin: left;
`;
const HeaderName = styled.div<{ $width: number; $rule?: boolean }>`
	flex: none;
	width: ${(p) => p.$width}px;
	height: 100%;
	padding-left: 6px;
	overflow: hidden;
	line-height: 16px;
	white-space: nowrap;
	border-bottom: ${(p) => (p.$rule ? `1px solid ${CYAN}` : 'none')};
`;
const HeaderCell = styled.div<{ $width: number; $tone?: string }>`
	flex: none;
	width: ${(p) => p.$width}px;
	height: 100%;
	margin-right: 1px;
	overflow: hidden;
	padding-left: 2px;
	line-height: 16px;
	white-space: nowrap;
	color: ${(p) => (p.$tone === 'light' ? '#1e2a50' : p.$tone === 'muted' ? '#00508a' : 'inherit')};
	background: ${(p) => (p.$tone === 'light' ? '#fff' : p.$tone === 'muted' ? '#0070b4' : 'transparent')};
`;
const ChartSvg = styled.svg`
	display: block;
	flex: none;
`;
const BottomStrip = styled.div<{ $height: number }>`
	position: relative;
	flex: none;
	height: ${(p) => p.$height}px;
	background: #f0f0f0;
`;
const ScrollDash = styled.div`
	position: absolute;
	right: 21px;
	top: 9px;
	width: 20px;
	height: 2px;
	background: #999;
`;
const SideColumn = styled.div`
	display: flex;
	flex-direction: column;
	flex: none;
	width: 552px;
`;
const SideWindow = styled.div<{ $second?: boolean }>`
	display: flex;
	flex-direction: column;
	flex: none;
	margin-top: ${(p) => (p.$second ? '0' : '3px')};
	border-top: 1px solid ${(p) => (p.$second ? '#333' : 'transparent')};
	background: #dfe6ee;
`;
const TpoText = styled.text<{ $tone: string }>`
	font-family: 'Noto Sans', sans-serif;
	font-size: 17px;
	font-weight: 700;
	letter-spacing: 3px;
	fill: ${(p) => (p.$tone === 'o' ? '#ff7a3c' : p.$tone === 'd' ? '#7a7f84' : '#ffffff')};
`;
const TagText = styled.text<{ $kind: string }>`
	font-family: Roboto, sans-serif;
	font-size: 14px;
	fill: ${(p) => (p.$kind === 'poc' ? '#ff7f50' : p.$kind === 'va' ? '#7d8a90' : CYAN)};
`;
const AxisText = styled.text<{ $tone?: string }>`
	font-family: Roboto, sans-serif;
	font-size: 14.5px;
	${(p) => (p.$tone ? `fill: ${p.$tone === 'cyan' ? CYAN : '#f0f4f6'};` : '')}
`;
const DateText = styled.text<{ $tone: string }>`
	font-family: Roboto, sans-serif;
	font-size: 14.5px;
	fill: ${(p) => (p.$tone === 'dark' ? '#26305e' : p.$tone === 'green' ? '#0a4a0a' : '#e8eef2')};
`;
const ClockText = styled.text`
	font-family: 'Noto Sans', sans-serif;
	font-size: 35px;
	font-weight: 700;
	fill: #ffffff;
`;
const RLevelText = styled.text`
	font-family: Roboto, sans-serif;
	font-size: 14px;
	fill: #b00030;
`;
const VolText = styled.text<{ $big?: boolean }>`
	font-family: Roboto, sans-serif;
	font-size: ${(p) => (p.$big ? '19px' : '14px')};
	fill: #f0f4f6;
`;
